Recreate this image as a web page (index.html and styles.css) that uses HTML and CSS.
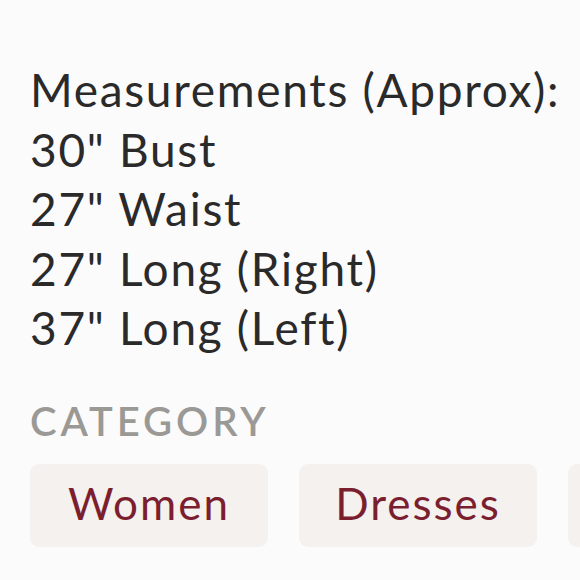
FILE: index.html
```html
<!DOCTYPE html>
<html lang="en">
<head>
<meta charset="utf-8">
<title>Item details</title>
<link rel="stylesheet" href="styles.css">
</head>
<body>
<main class="details">
  <div class="measurements">
    <p class="line">Measurements (Approx):</p>
    <p class="line">30" Bust</p>
    <p class="line">27" Waist</p>
    <p class="line">27" Long (Right)</p>
    <p class="line">37" Long (Left)</p>
  </div>
  <section class="category">
    <h2 class="category-title">CATEGORY</h2>
    <div class="chips">
      <a class="chip">Women</a>
      <a class="chip">Dresses</a>
      <a class="chip chip-more" aria-hidden="true"></a>
    </div>
  </section>
</main>
</body>
</html>
```

FILE: styles.css
```css
html, body {
  margin: 0;
  padding: 0;
  background: #fcfbfb;
}
body {
  font-family: Lato, "Noto Sans", sans-serif;
  color: #2a2a2a;
  overflow: hidden;
}
.details {
  padding: 60px 0 0 30px;
}
.measurements .line {
  margin: 0;
  font-size: 46px;
  line-height: 59.5px;
  letter-spacing: 1.7px;
}
.category {
  margin-top: 38px;
}
.category-title {
  margin: 0;
  font-size: 40px;
  font-weight: 600;
  color: #9b9995;
  line-height: 50px;
  letter-spacing: 3.9px;
}
.chips {
  display: flex;
  gap: 31px;
  margin-top: 18px;
  white-space: nowrap;
}
.chip {
  flex: 0 0 auto;
  display: flex;
  align-items: center;
  justify-content: center;
  width: 238px;
  height: 83px;
  padding-bottom: 4px;
  box-sizing: border-box;
  border-radius: 9px;
  background: #f4f1ef;
  color: #7b1f2f;
  font-size: 44px;
  letter-spacing: 2px;
}
```
